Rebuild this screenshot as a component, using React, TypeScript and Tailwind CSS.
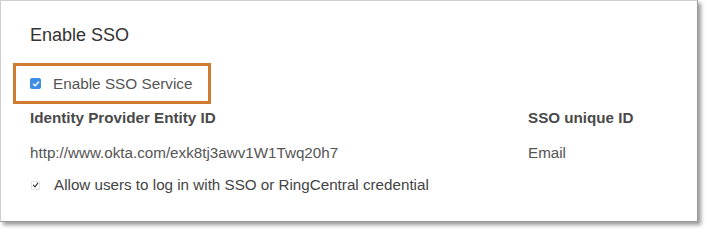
import React from "react";

const font = { fontFamily: '"Liberation Sans", Arial, sans-serif' };

function BlueCheck() {
  return (
    <span className="flex h-[11px] w-[11px] items-center justify-center rounded-[2px] bg-[#3d8ee6]">
      <svg viewBox="0 0 10 10" className="h-[8px] w-[8px]">
        <path d="M1.8 5.2 L4 7.3 L8.2 2.6" fill="none" stroke="#fff" strokeWidth="1.8" strokeLinecap="round" strokeLinejoin="round" />
      </svg>
    </span>
  );
}

function SmallCheck() {
  return (
    <span className="flex h-[9px] w-[9px] items-center justify-center rounded-[1px] border border-[#e2e2e2] bg-white">
      <svg viewBox="0 0 10 10" className="h-[8px] w-[8px]">
        <path d="M2 5.3 L4.2 7.6 L8.3 2.2" fill="none" stroke="#333" strokeWidth="1.6" strokeLinecap="round" strokeLinejoin="round" />
      </svg>
    </span>
  );
}

export default function App() {
  return (
    <div className="h-[234px] w-[708px] bg-white" style={font}>
      <div className="h-[222px] w-[698px] border border-t-[#cfcfcf] border-l-[#cfcfcf] border-r-[#9a9a9a] border-b-[#9a9a9a] bg-white shadow-[3px_3px_4px_rgba(0,0,0,0.4)]">
        <h2 className="ml-[29px] mt-[24px] text-[18px] leading-[21px] text-[#333]">Enable SSO</h2>

        {/* highlighted option */}
        <div className="ml-[12px] mt-[17px] flex h-[41px] w-[198px] items-center border-[3px] border-[#cf7b2f] pl-[14px]">
          <BlueCheck />
          <span className="ml-[12px] text-[15.3px] leading-[18px] text-[#555]">Enable SSO Service</span>
        </div>

        <div className="ml-[29px] mt-[5px] grid grid-cols-[498px_1fr] text-[15.2px] leading-[18px]">
          <div className="font-bold text-[#4a4a4a]">Identity Provider Entity ID</div>
          <div className="font-bold text-[#4a4a4a]">SSO unique ID</div>
          <div className="mt-[17px] text-[#555]">http://www.okta.com/exk8tj3awv1W1Twq20h7</div>
          <div className="mt-[17px] text-[#555]">Email</div>
        </div>

        <div className="ml-[30px] mt-[14px] flex items-center">
          <SmallCheck />
          <span className="ml-[14px] text-[15.2px] leading-[18px] text-[#444]">
            Allow users to log in with SSO or RingCentral credential
          </span>
        </div>
      </div>
    </div>
  );
}
